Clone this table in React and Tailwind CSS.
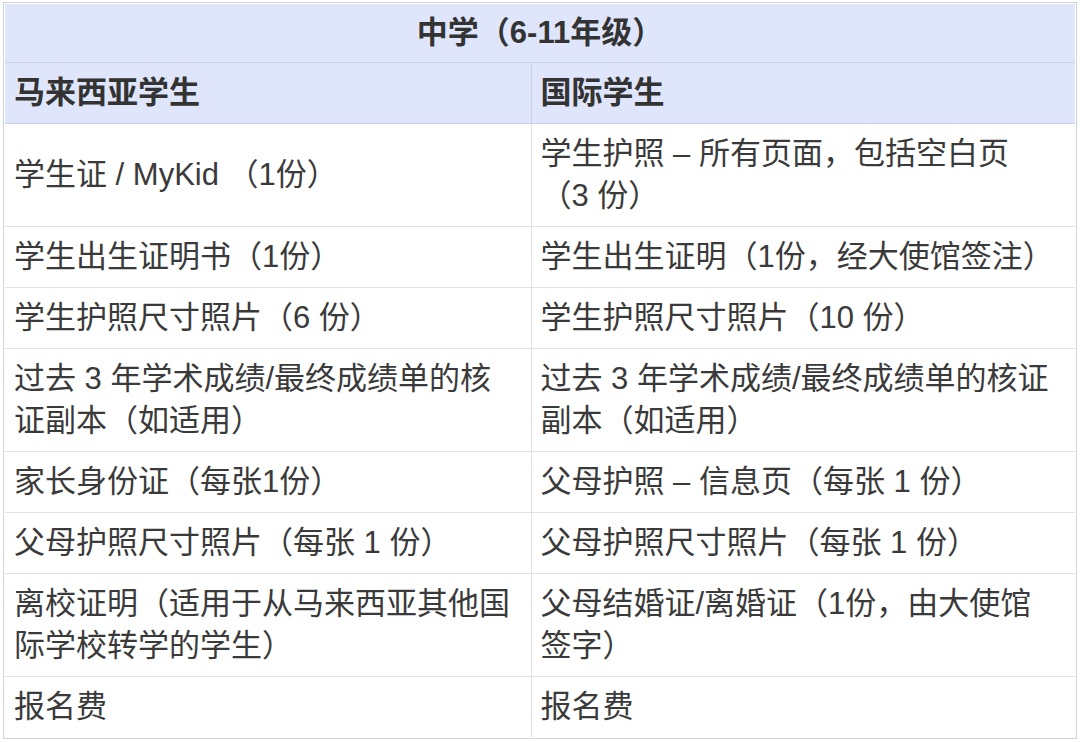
import React from 'react'

const rows = [
  [['学生证 / MyKid （1份）'], ['学生护照 – 所有页面，包括空白页', '（3 份）']],
  [['学生出生证明书（1份）'], ['学生出生证明（1份，经大使馆签注）']],
  [['学生护照尺寸照片（6 份）'], ['学生护照尺寸照片（10 份）']],
  [['过去 3 年学术成绩/最终成绩单的核', '证副本（如适用）'], ['过去 3 年学术成绩/最终成绩单的核证', '副本（如适用）']],
  [['家长身份证（每张1份）'], ['父母护照 – 信息页（每张 1 份）']],
  [['父母护照尺寸照片（每张 1 份）'], ['父母护照尺寸照片（每张 1 份）']],
  [['离校证明（适用于从马来西亚其他国', '际学校转学的学生）'], ['父母结婚证/离婚证（1份，由大使馆', '签字）']],
  [['报名费'], ['报名费']],
]

const Lines = ({ lines }) => (
  <>
    {lines.map((l, i) => (
      <React.Fragment key={i}>
        {i > 0 && <br />}
        {l}
      </React.Fragment>
    ))}
  </>
)

export default function App() {
  return (
    <div className="bg-white w-[1080px] h-[742px] pt-[2px] pl-[3px] font-['Liberation_Sans','Noto_Sans_CJK_SC',sans-serif] text-[#3a3a3a]">
      <div className="w-[1074px] border border-[#cfd2d8] p-px">
        <table className="w-full table-fixed border-collapse text-[31px] leading-[42px]">
          <colgroup>
            <col className="w-[526px]" />
            <col />
          </colgroup>
          <thead>
            <tr className="bg-[#dfe6fb]">
              <th colSpan={2} className="border border-[#cad1e4] border-t-0 border-x-0 py-[8px] text-center font-bold text-[#333]">
                中学（6-11年级）
              </th>
            </tr>
            <tr className="bg-[#dfe6fb]">
              <th className="border border-[#cad1e4] border-l-0 py-[9px] px-[9px] text-left font-bold text-[#333]">马来西亚学生</th>
              <th className="border border-[#cad1e4] border-r-0 py-[9px] px-[9px] text-left font-bold text-[#333]">国际学生</th>
            </tr>
          </thead>
          <tbody>
            {rows.map(([left, right], i) => (
              <tr key={i}>
                <td className={`border border-[#e2e2e2] border-l-0 py-[9px] px-[9px] whitespace-nowrap ${i === rows.length - 1 ? 'border-b-0' : ''}`}>
                  <Lines lines={left} />
                </td>
                <td className={`border border-[#e2e2e2] border-r-0 py-[9px] px-[9px] whitespace-nowrap ${i === rows.length - 1 ? 'border-b-0' : ''}`}>
                  <Lines lines={right} />
                </td>
              </tr>
            ))}
          </tbody>
        </table>
      </div>
    </div>
  )
}
